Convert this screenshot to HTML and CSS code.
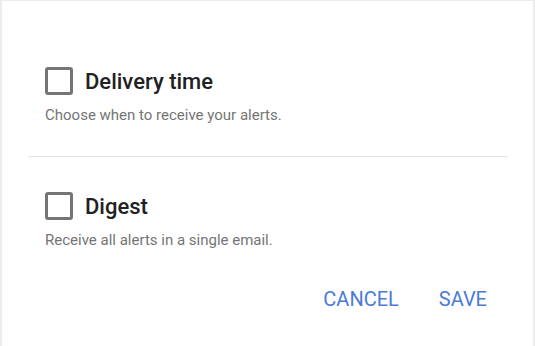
FILE: index.html
```html
<!DOCTYPE html>
<html lang="en">
<head>
    <meta charset="UTF-8">
    <meta name="viewport" content="width=device-width, initial-scale=1.0">
    <title>Alert settings</title>
    <link rel="stylesheet" href="styles.css">
</head>
<body>
    <div class="dialog">
        <div class="section first">
            <label class="option">
                <span class="checkbox"></span>
                <span class="option-title">Delivery time</span>
            </label>
            <div class="option-desc">Choose when to receive your alerts.</div>
        </div>

        <hr class="divider">

        <div class="section">
            <label class="option">
                <span class="checkbox"></span>
                <span class="option-title">Digest</span>
            </label>
            <div class="option-desc">Receive all alerts in a single email.</div>
        </div>

        <div class="actions">
            <button class="text-button">CANCEL</button>
            <button class="text-button">SAVE</button>
        </div>
    </div>
</body>
</html>
```

FILE: styles.css
```css
html, body {
    height: 100%;
}
body {
    margin: 0;
    font-family: Roboto, Arial, sans-serif;
    background-color: #ececec;
    box-sizing: border-box;
    padding: 1px 2px 0 2px;
}
.dialog {
    background-color: #fff;
    height: 100%;
    box-sizing: border-box;
    padding-top: 66px;
}
.section {
    padding: 0 43px;
}
.option {
    display: flex;
    align-items: center;
    height: 28px;
}
.checkbox {
    width: 28px;
    height: 28px;
    box-sizing: border-box;
    border: 3px solid #757575;
    border-radius: 3px;
    margin-right: 12px;
}
.option-title {
    font-size: 22px;
    font-weight: 500;
    color: #212121;
}
.option-desc {
    margin-top: 10px;
    font-size: 15px;
    line-height: 20px;
    color: #757575;
}
.divider {
    border: none;
    border-top: 1px solid #e2e2e2;
    margin: 31px 25px 35px 26px;
}
.actions {
    display: flex;
    justify-content: flex-end;
    gap: 24px;
    padding: 0 38px;
    margin-top: 31px;
}
.text-button {
    background: none;
    border: none;
    padding: 8px;
    font-family: Roboto, Arial, sans-serif;
    font-size: 20px;
    line-height: 20px;
    color: #4a7bd6;
    cursor: pointer;
}
```
